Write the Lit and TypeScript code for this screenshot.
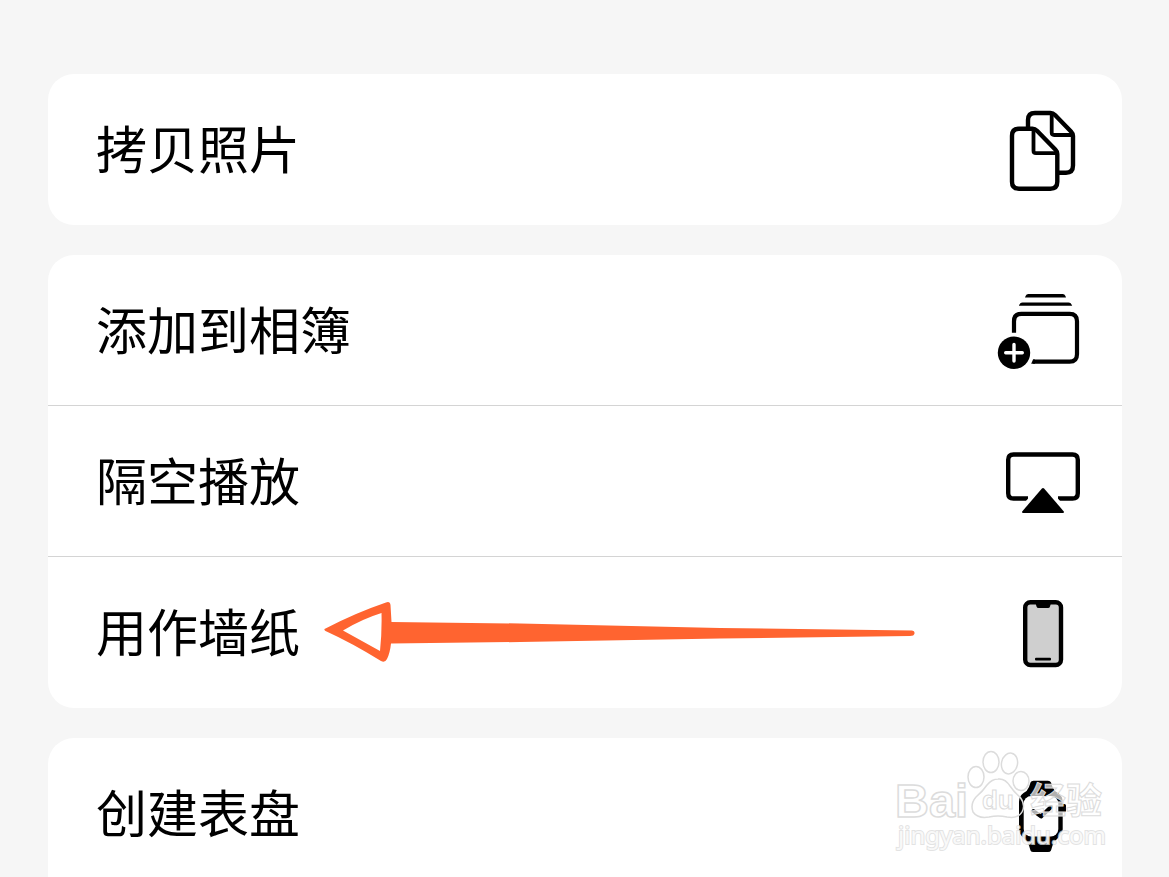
import { LitElement, html, css, svg, nothing } from "lit";
import { customElement, property } from "lit/decorators.js";

type IconName = "copy" | "album" | "airplay" | "phone" | "watch";

interface Action {
  label: string;
  icon: IconName;
  marked?: boolean;
}

const GROUPS: Action[][] = [
  [{ label: "拷贝照片", icon: "copy" }],
  [
    { label: "添加到相簿", icon: "album" },
    { label: "隔空播放", icon: "airplay" },
    { label: "用作墙纸", icon: "phone", marked: true },
  ],
  [{ label: "创建表盘", icon: "watch" }],
];

const ICONS = {
  copy: svg`
    <g fill="none" stroke="#000" stroke-width="4.4" stroke-linejoin="round">
      <path d="M31 25V16Q31 9 38 9H53.5Q56 9 58 11L74 27.5Q76 29.5 76 32V61.5Q76 68.7 69 68.7H61"/>
      <path stroke-width="3.8" d="M54.7 10V28.5Q54.7 31 57.2 31H75"/>
      <path fill="#fff" d="M22 24.7H35.5Q38 24.7 40 26.7L58.3 45.5Q60.3 47.5 60.3 50V77.7Q60.3 84.7 53.3 84.7H22Q15 84.7 15 77.7V31.7Q15 24.7 22 24.7Z"/>
      <path stroke-width="3.8" d="M36.5 26V46.8Q36.5 49.2 39 49.2H59"/>
    </g>`,
  album: svg`
    <path d="M31.5 9H65.5Q68 9 69 12.4H28Q29 9 31.5 9Z"/>
    <path d="M25.5 17.4H71.5Q74 17.4 75.2 20.8H21.8Q23 17.4 25.5 17.4Z"/>
    <path fill="none" stroke="#000" stroke-width="4.2" d="M17 47.7V36.2Q17 28.8 24.4 28.8H72.6Q80 28.8 80 36.2V69.2Q80 76.6 72.6 76.6H36"/>
    <path d="M34.2 78.7L36 74.5H38V78.7Z"/>
    <circle cx="17" cy="67.8" r="16.2"/>
    <path fill="none" stroke="#fff" stroke-width="3.4" stroke-linecap="round" d="M8.7 67.8H25.3M17 59.5V76.1"/>`,
  airplay: svg`
    <path fill="none" stroke="#000" stroke-width="4.4" d="M31 62.5H16.5Q11.2 62.5 11.2 57.2V23.8Q11.2 18.5 16.5 18.5H75.5Q80.8 18.5 80.8 23.8V57.2Q80.8 62.5 75.5 62.5H61"/>
    <path fill="#fff" d="M46 46L64 66H28Z"/>
    <path d="M44.9 52.6Q46 51.4 47.1 52.6L66.6 75.2Q67.8 77 65.6 77H26.4Q24.2 77 25.4 75.2Z"/>`,
  phone: svg`
    <rect x="28.2" y="15.2" width="35.8" height="62.8" rx="5.2" fill="#cfcfcf" stroke="#000" stroke-width="4.4"/>
    <path d="M38.5 16H54L53 19.5Q52.6 21 51 21H41.5Q40 21 39.5 19.5Z"/>
    <rect x="38" y="70.8" width="16" height="2.6" rx="1"/>`,
  watch: svg`
    <path d="M32 19L33.5 14.5Q34.2 12.7 36.5 12.7H51Q53.3 12.7 54 14.5L55.5 19Q57 23 61 25Q65.7 28 65.7 34V36H67.5Q69 36 69 37.5V42.5Q69 44 67.5 44H65.7V61Q65.7 66 61 70Q57 73 55.5 77.5L54 82.5Q53.3 84 51 84H36.5Q34.2 84 33.5 82.5L32 77.5Q30.5 73 26.5 70Q22 66 22 61V34Q22 28 26.5 25Q30.5 23 32 19Z"/>
    <rect x="26.7" y="28" width="34.6" height="40.5" rx="7.5" fill="#fff"/>
    <path fill="none" stroke="#000" stroke-width="4" stroke-linecap="round" stroke-linejoin="round" d="M36.5 43L44 48.5L54 39"/>`,
};

@customElement("action-row")
export class ActionRow extends LitElement {
  @property() label = "";
  @property() icon: IconName = "copy";
  @property({ type: Boolean }) marked = false;

  static styles = css`
    :host {
      display: block;
      position: relative;
    }
    .row {
      display: flex;
      align-items: center;
      justify-content: space-between;
      width: 100%;
      box-sizing: border-box;
      margin: 0;
      padding: 30px 34px 30px 48px;
      border: 0;
      background: none;
      color: #000;
      font: 400 51px/76px "Noto Sans CJK SC", "Noto Sans", sans-serif;
      text-align: left;
      cursor: pointer;
    }
    .label {
      padding-bottom: 6px;
    }
    .icon {
      flex: none;
      width: 91px;
      height: 91px;
    }
    .arrow {
      position: absolute;
      left: 272px;
      top: 38px;
      width: 600px;
      height: 72px;
      pointer-events: none;
    }
  `;

  render() {
    return html`
      <button class="row" type="button">
        <span class="label">${this.label}</span>
        <svg class="icon" viewBox="0 0 91 91" aria-hidden="true">${ICONS[this.icon]}</svg>
      </button>
      ${this.marked
        ? html`<svg class="arrow" viewBox="0 0 600 72" aria-hidden="true">
            <path
              fill="#ff6430"
              fill-rule="evenodd"
              d="M4.5 34Q35 18 66 7.5Q70 6 70.5 10L71.5 27L200 28.5L400 33L592 35.5Q595 36 594.5 38.5Q594 41 590 41L400 43.5L200 47L71 48.5Q70 58 67 64Q65 68 61 66Q32 48 5.5 36Q4 35 4.5 34ZM23 35.5L60 56Q62 38 61.5 18Q42 24 23 35.5Z"
            />
          </svg>`
        : nothing}
    `;
  }
}

@customElement("app-root")
export class AppRoot extends LitElement {
  static styles = css`
    :host {
      display: block;
      position: relative;
      box-sizing: border-box;
      height: 100vh;
      overflow: hidden;
      padding: 74px 47px 0 48px;
      background: #f6f6f6;
    }
    .groups {
      display: flex;
      flex-direction: column;
      gap: 30px;
    }
    .card {
      list-style: none;
      margin: 0;
      padding: 0;
      border-radius: 26px;
      background: #fff;
    }
    .card:last-child {
      border-radius: 26px 26px 0 0;
    }
    .item:not(:last-child) {
      box-shadow: inset 0 -1px #d4d4d4;
    }
    .watermark {
      position: absolute;
      right: 49px;
      bottom: 17px;
      width: 230px;
      height: 120px;
      pointer-events: none;
    }
    .shape {
      fill: #fff;
      fill-opacity: 0.5;
      stroke: #dcdcdc;
      stroke-width: 1.5;
    }
    .toe {
      fill-opacity: 0;
    }
    .brand {
      font: 700 47px "Liberation Sans", sans-serif;
    }
    .inner {
      font: 700 26px "Liberation Sans", sans-serif;
      stroke-width: 1;
    }
    .chinese {
      font: 700 36px "Noto Sans CJK SC", sans-serif;
      fill-opacity: 0.7;
      stroke-width: 1;
    }
    .address {
      font: 400 24px "Noto Sans", sans-serif;
      fill-opacity: 0.8;
      paint-order: stroke;
      stroke-opacity: 0.8;
      stroke-width: 2;
    }
  `;

  render() {
    return html`
      <main class="groups">
        ${GROUPS.map(
          (group) => html`<ul class="card">
            ${group.map(
              (a) => html`<li class="item">
                <action-row .label=${a.label} .icon=${a.icon} .marked=${!!a.marked}></action-row>
              </li>`
            )}
          </ul>`
        )}
      </main>
      <svg class="watermark" viewBox="0 0 230 120">
        <text class="shape brand" x="5" y="77">Bai</text>
        <g class="shape toe">
          <ellipse cx="86" cy="37" rx="8" ry="10.5"/>
          <ellipse cx="101" cy="22" rx="8" ry="10.5"/>
          <ellipse cx="119.5" cy="23.5" rx="8" ry="10.5" transform="rotate(12 119.5 23.5)"/>
          <ellipse cx="131" cy="41" rx="8" ry="9.5"/>
          <path d="M108 39Q115 38 120 46Q124 52 130 57Q136 65 132 72Q128 79 117 77Q108 75 99 77Q88 79 83 72Q80 64 86 57Q93 51 97 45Q102 39 108 39Z"/>
        </g>
        <text class="shape inner" x="92" y="69">du</text>
        <text class="shape chinese" x="140" y="74">经验</text>
        <text class="shape address" x="8" y="104">jingyan.baidu.com</text>
      </svg>
    `;
  }
}
